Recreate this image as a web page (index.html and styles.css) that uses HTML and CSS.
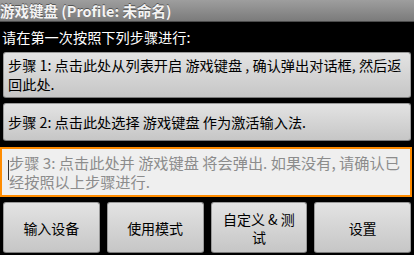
FILE: index.html
```html
<!DOCTYPE html>
<html lang="zh-CN">
<head>
<meta charset="utf-8">
<link rel="stylesheet" href="styles.css">
</head>
<body>
<div class="app">
  <div class="title">游戏键盘 (Profile: 未命名)</div>
  <div class="intro">请在第一次按照下列步骤进行:</div>
  <div class="steps">
    <div class="btn step step1">步骤 1: 点击此处从列表开启 游戏键盘 , 确认弹出对话框, 然后返回此处.</div>
    <div class="btn step step2">步骤 2: 点击此处选择 游戏键盘 作为激活输入法.</div>
  </div>
  <div class="field"><span class="cursor"></span>步骤 3: 点击此处并 游戏键盘 将会弹出. 如果没有, 请确认已经按照以上步骤进行.</div>
  <div class="bar">
    <div class="btn action">输入设备</div>
    <div class="btn action">使用模式</div>
    <div class="btn action">自定义 &amp; 测试</div>
    <div class="btn action">设置</div>
  </div>
</div>
</body>
</html>
```

FILE: styles.css
```css
html, body {
  margin: 0;
  padding: 0;
  background: #000;
}
.app {
  width: 414px;
  height: 255px;
  overflow: hidden;
  font-family: "Noto Sans CJK SC", "Noto Sans", sans-serif;
  font-size: 14.2px;
}
.title {
  height: 21px;
  line-height: 21px;
  background: linear-gradient(#9e9e9e, #7b7b7b);
  border-bottom: 1px solid #4c4c4c;
  color: #f4f4f4;
  font-weight: bold;
  font-size: 14.5px;
  padding-left: 0;
  text-shadow: 0 -1px 0 #555;
  white-space: nowrap;
}
.intro {
  height: 30px;
  line-height: 30px;
  color: #fff;
  padding-left: 2px;
}
.steps {
  display: flex;
  flex-direction: column;
  gap: 5px;
  padding: 0 3px;
}
.btn {
  background: linear-gradient(#e3e3e3, #c6c6c6);
  border: 1px solid #9a9a9a;
  border-bottom-color: #7a7a7a;
  border-radius: 3px;
  box-sizing: border-box;
  color: #000;
}
.step {
  min-height: 38px;
  padding: 3px 3px 3px 4px;
  line-height: 19px;
  display: flex;
  align-items: center;
}
.field {
  position: relative;
  margin: 6px 2px 0 0;
  height: 50px;
  box-sizing: border-box;
  border: 2px solid #ff8c00;
  background: #efefef;
  color: #8c8c8c;
  padding: 4px 2px 4px 7px;
  font-size: 15.2px;
  line-height: 19px;
}
.cursor {
  position: absolute;
  left: 6px;
  top: 11px;
  width: 1px;
  height: 20px;
  background: #333;
}
.bar {
  display: grid;
  grid-template-columns: repeat(4, 1fr);
  gap: 7px;
  padding: 0 3px;
  margin-top: 5px;
}
.action {
  height: 51px;
  display: flex;
  align-items: center;
  justify-content: center;
  text-align: center;
  padding: 0 10px;
  font-size: 14px;
  line-height: 18px;
}
```
